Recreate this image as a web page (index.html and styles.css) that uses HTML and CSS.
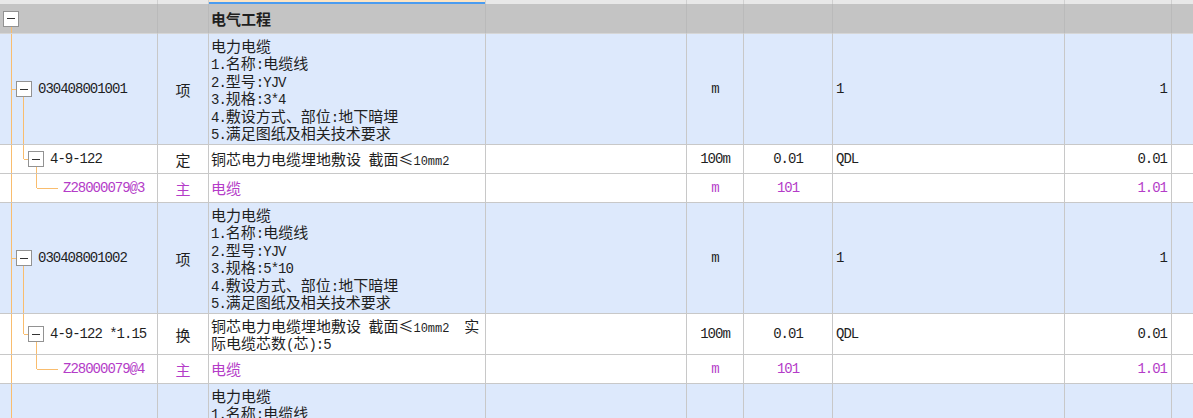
FILE: index.html
```html
<!DOCTYPE html>
<html lang="zh-CN">
<head>
  <meta charset="UTF-8">
  <title>分部分项工程</title>
  <link rel="stylesheet" href="styles.css">
</head>
<body>

<div class="sheet">
  <div class="row head">
    <div></div><div></div><div class="sel"></div><div></div><div></div><div></div><div></div><div></div><div></div>
  </div>

  <div class="row group">
    <div class="tree t-root"><span class="toggle"></span></div>
    <div></div>
    <div class="name">电气工程</div>
    <div></div><div></div><div></div><div></div><div></div><div></div>
  </div>

  <div class="row item">
    <div class="tree t-item"><span class="toggle"></span><span class="en">030408001001</span></div>
    <div class="c">项</div>
    <div class="desc">
      <p>电力电缆</p>
      <p><span class="en">1.</span>名称<span class="en">:</span>电缆线</p>
      <p><span class="en">2.</span>型号<span class="en">:YJV</span></p>
      <p><span class="en">3.</span>规格<span class="en">:3*4</span></p>
      <p><span class="en">4.</span>敷设方式、部位<span class="en">:</span>地下暗埋</p>
      <p><span class="en">5.</span>满足图纸及相关技术要求</p>
    </div>
    <div></div>
    <div class="c en">m</div>
    <div></div>
    <div class="l en">1</div>
    <div class="r en">1</div>
    <div></div>
  </div>

  <div class="row quota">
    <div class="tree t-quota"><span class="toggle"></span><span class="en">4-9-122</span></div>
    <div class="c">定</div>
    <div class="desc"><p>铜芯电力电缆埋地敷设<span class="en"> </span>截面≤<span class="sm">10mm2</span></p></div>
    <div></div>
    <div class="c en">100m</div>
    <div class="c en">0.01</div>
    <div class="l en">QDL</div>
    <div class="r en">0.01</div>
    <div></div>
  </div>

  <div class="row main">
    <div class="tree t-main"><span class="en">Z28000079@3</span></div>
    <div class="c">主</div>
    <div class="desc"><p>电缆</p></div>
    <div></div>
    <div class="c en">m</div>
    <div class="c en">101</div>
    <div></div>
    <div class="r en">1.01</div>
    <div></div>
  </div>

  <div class="row item">
    <div class="tree t-item"><span class="toggle"></span><span class="en">030408001002</span></div>
    <div class="c">项</div>
    <div class="desc">
      <p>电力电缆</p>
      <p><span class="en">1.</span>名称<span class="en">:</span>电缆线</p>
      <p><span class="en">2.</span>型号<span class="en">:YJV</span></p>
      <p><span class="en">3.</span>规格<span class="en">:5*10</span></p>
      <p><span class="en">4.</span>敷设方式、部位<span class="en">:</span>地下暗埋</p>
      <p><span class="en">5.</span>满足图纸及相关技术要求</p>
    </div>
    <div></div>
    <div class="c en">m</div>
    <div></div>
    <div class="l en">1</div>
    <div class="r en">1</div>
    <div></div>
  </div>

  <div class="row quota tall">
    <div class="tree t-quota"><span class="toggle"></span><span class="en">4-9-122 *1.15</span></div>
    <div class="c">换</div>
    <div class="desc">
      <p>铜芯电力电缆埋地敷设<span class="en"> </span>截面≤<span class="sm">10mm2</span><span class="en">  </span>实</p>
      <p>际电缆芯数<span class="en">(</span>芯<span class="en">):5</span></p>
    </div>
    <div></div>
    <div class="c en">100m</div>
    <div class="c en">0.01</div>
    <div class="l en">QDL</div>
    <div class="r en">0.01</div>
    <div></div>
  </div>

  <div class="row main">
    <div class="tree t-main"><span class="en">Z28000079@4</span></div>
    <div class="c">主</div>
    <div class="desc"><p>电缆</p></div>
    <div></div>
    <div class="c en">m</div>
    <div class="c en">101</div>
    <div></div>
    <div class="r en">1.01</div>
    <div></div>
  </div>

  <div class="row item">
    <div class="tree t-item"><span class="toggle"></span><span class="en">030408001003</span></div>
    <div class="c">项</div>
    <div class="desc">
      <p>电力电缆</p>
      <p><span class="en">1.</span>名称<span class="en">:</span>电缆线</p>
      <p><span class="en">2.</span>型号<span class="en">:YJV</span></p>
      <p><span class="en">3.</span>规格<span class="en">:5*16</span></p>
      <p><span class="en">4.</span>敷设方式、部位<span class="en">:</span>地下暗埋</p>
      <p><span class="en">5.</span>满足图纸及相关技术要求</p>
    </div>
    <div></div>
    <div class="c en">m</div>
    <div></div>
    <div class="l en">1</div>
    <div class="r en">1</div>
    <div></div>
  </div>
</div>

</body>
</html>
```

FILE: styles.css
```css
body {
  margin: 0;
  overflow: hidden;
  background: #fff;
  font-family: "Noto Sans CJK SC", sans-serif;
  font-size: 15px;
  color: #1f1f1f;
}

.row {
  display: grid;
  grid-template-columns: 158px 51px 277px 201px 57px 89px 232px 107px 1fr;
  grid-auto-rows: 100%;
}

.row > div {
  box-sizing: border-box;
  display: flex;
  align-items: center;
  overflow: hidden;
  white-space: nowrap;
  border-right: 1px solid #c8c8c8;
  border-bottom: 1px solid #c8c8c8;
}

.row > div:last-child {
  border-right: none;
}

/* row types */
.head {
  height: 4px;
  background: #e8e8e8;
}

.head > div {
  border-bottom: none;
  border-right-color: #d0d0d0;
}

.head .sel {
  background: linear-gradient(#fde5c4 50%, #4b9cf0 50%);
}

.group {
  height: 30px;
  background: #c4c4c4;
}

.group > div {
  border-right-color: #bababa;
  border-bottom-color: #d6d6d6;
}

.item {
  height: 111px;
  background: #dde9fc;
}

.quota,
.main {
  height: 29px;
  background: #fff;
}

.quota.tall {
  height: 41px;
}

.main {
  color: #b43cc8;
}

/* cell alignment */
.c {
  justify-content: center;
}

.l {
  padding-left: 3px;
}

.r {
  justify-content: flex-end;
  padding-right: 4px;
}

.name {
  font-weight: bold;
  padding-left: 2px;
}

.row > .desc {
  flex-direction: column;
  justify-content: center;
  align-items: flex-start;
  padding-left: 2px;
}

.desc p {
  margin: 0;
  height: 17.5px;
  line-height: 17.5px;
}

.en {
  font-family: "Liberation Mono", monospace;
  font-size: 14px;
  letter-spacing: -1px;
  white-space: pre;
}

.desc .en,
.sm {
  line-height: 1;
}

.sm {
  font-family: "Liberation Mono", monospace;
  font-size: 12px;
}

/* tree column */
.tree {
  --ln: linear-gradient(#f9bd6e, #f9bd6e);
  background-repeat: no-repeat;
}

.t-root {
  padding-left: 3px;
  background-image: var(--ln);
  background-position: 11px 100%;
  background-size: 1px 50%;
}

.t-item {
  padding-left: 16px;
  background-image: var(--ln), var(--ln), var(--ln);
  background-position: 11px 0, 23px 100%, 12px 50%;
  background-size: 1px 100%, 1px 50%, 4px 1px;
}

.t-quota {
  padding-left: 28px;
  background-image: var(--ln), var(--ln), var(--ln), var(--ln);
  background-position: 11px 0, 23px 0, 24px 50%, 36px 100%;
  background-size: 1px 100%, 1px 50%, 4px 1px, 1px 50%;
}

.t-main {
  padding-left: 63px;
  background-image: var(--ln), var(--ln), var(--ln);
  background-position: 11px 0, 36px 0, 37px 50%;
  background-size: 1px 100%, 1px 50%, 21px 1px;
}

.toggle {
  box-sizing: border-box;
  flex: none;
  width: 16px;
  height: 16px;
  margin-right: 6px;
  border: 1px solid #929292;
  background: #fff;
  display: flex;
  align-items: center;
  justify-content: center;
}

.toggle::before {
  content: "";
  width: 8px;
  height: 1px;
  background: #333;
}
```
